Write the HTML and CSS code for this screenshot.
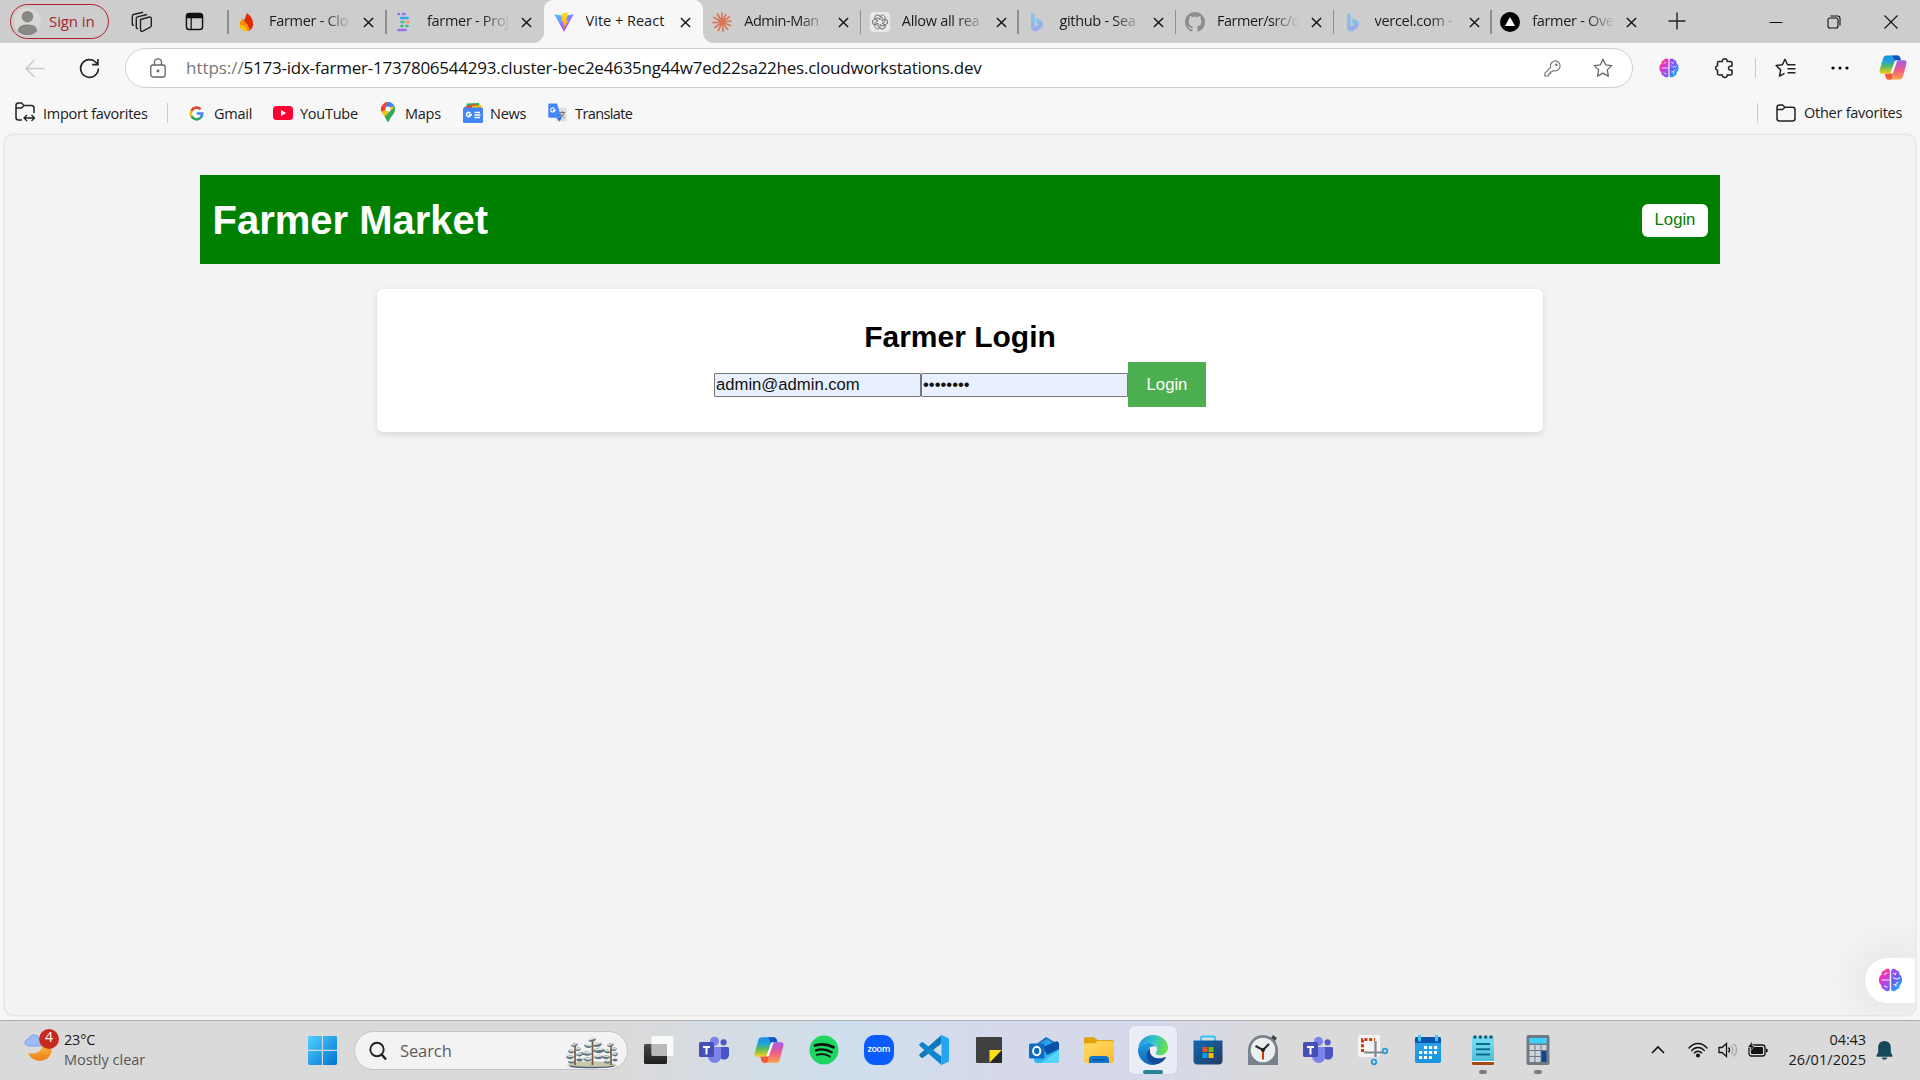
FILE: index.html
```html
<!DOCTYPE html>
<html lang="en">
<head>
<meta charset="utf-8">
<title>Vite + React</title>
<link rel="stylesheet" href="styles.css">
</head>
<body>
<svg class="defs" width="0" height="0">
  <defs>
    <linearGradient id="gBrainL" x1="0" y1="0" x2="0.6" y2="1"><stop offset="0" stop-color="#f59a23"/><stop offset=".4" stop-color="#ee2fc0"/><stop offset="1" stop-color="#7d5cf5"/></linearGradient>
    <linearGradient id="gBrainR" x1="0" y1="0" x2="0.6" y2="1"><stop offset="0" stop-color="#b548e8"/><stop offset=".5" stop-color="#6b5cf3"/><stop offset="1" stop-color="#18b4ff"/></linearGradient>
    <linearGradient id="gCopA" x1="0" y1="0" x2="0" y2="1"><stop offset="0" stop-color="#1a8fe6"/><stop offset=".35" stop-color="#1fa5d8"/><stop offset=".6" stop-color="#5dba5a"/><stop offset="1" stop-color="#f5cf1c"/></linearGradient>
    <linearGradient id="gCopB" x1="0" y1="0" x2="0" y2="1"><stop offset="0" stop-color="#a45ce8"/><stop offset=".5" stop-color="#ee5a8c"/><stop offset="1" stop-color="#fca44c"/></linearGradient>
    <linearGradient id="gVite" x1="0" y1="0" x2=".6" y2="1"><stop offset="0" stop-color="#41d1ff"/><stop offset="1" stop-color="#bd34fe"/></linearGradient>
    <linearGradient id="gBolt" x1="0" y1="0" x2="0" y2="1"><stop offset="0" stop-color="#ffdd35"/><stop offset="1" stop-color="#ffa800"/></linearGradient>
    <linearGradient id="gBing" x1="0" y1="0" x2="0.5" y2="1"><stop offset="0" stop-color="#86cbe6"/><stop offset=".6" stop-color="#8fb9ea"/><stop offset="1" stop-color="#a0a5ea"/></linearGradient>
    <linearGradient id="gWin" x1="0" y1="0" x2="1" y2="1"><stop offset="0" stop-color="#4fd2ff"/><stop offset="1" stop-color="#0072d0"/></linearGradient>
    <linearGradient id="gMoon" x1="0" y1="0" x2="0" y2="1"><stop offset="0" stop-color="#f6bd3c"/><stop offset="1" stop-color="#ef7d1a"/></linearGradient>
    <linearGradient id="gFolder" x1="0" y1="0" x2="1" y2="1"><stop offset="0" stop-color="#ffdc6b"/><stop offset="1" stop-color="#fbbb2d"/></linearGradient>
    <linearGradient id="gEdgeA" x1="0" y1=".3" x2="1" y2=".5"><stop offset="0" stop-color="#1c8fdd"/><stop offset=".45" stop-color="#2fc3cf"/><stop offset="1" stop-color="#6be24a"/></linearGradient>
    <linearGradient id="gEdgeB" x1="0" y1="0" x2="0" y2="1"><stop offset="0" stop-color="#1b9de2"/><stop offset="1" stop-color="#1265b8"/></linearGradient>
    <linearGradient id="gStore" x1="0" y1="0" x2="1" y2="1"><stop offset="0" stop-color="#0d69b5"/><stop offset="1" stop-color="#263a63"/></linearGradient>
    <linearGradient id="gNote" x1="0" y1="0" x2="0" y2="1"><stop offset="0" stop-color="#7ae0f0"/><stop offset="1" stop-color="#4fbcd9"/></linearGradient>
    <linearGradient id="gCal" x1="0" y1="0" x2="0" y2="1"><stop offset="0" stop-color="#2ba6f0"/><stop offset="1" stop-color="#1b93e0"/></linearGradient>
    <linearGradient id="gDark" x1="0" y1="0" x2="0" y2="1"><stop offset="0" stop-color="#4a4a4a"/><stop offset="1" stop-color="#1e1e1e"/></linearGradient>
  </defs>
  <symbol id="brain" viewBox="0 0 20 20">
    <path d="M9.400 1.600C8.400.2 5.800.2 5 2 3.200 2 2 3.800 2.600 5.400 1 6.200 .3 8 .4 10c0 2 .6 3.400 1.900 4.200-.2 2 .9 3.400 2.500 3.700 1 1.800 3.600 1.900 4.600.5z" fill="url(#gBrainL)"/>
    <path d="M10.600 1.600c1-1.400 3.600-1.400 4.400.4 1.800 0 3 1.800 2.400 3.400 1.600.8 2.300 2.600 2.200 4.600 0 2-.6 3.400-1.900 4.200.2 2-.9 3.400-2.500 3.700-1 1.800-3.600 1.900-4.600.5z" fill="url(#gBrainR)"/>
    <path d="M9.400 10H3M5 5.500l2-1.500M5 15l2.200 1M12.500 4.500l1.500 1 .5-1.500M12.500 8c1.500 1.500 3 1.500 5 .2M12.800 14l1.700-.5 1.500-1.500M14.500 13.500v2" stroke="#fff" stroke-width=".9" stroke-opacity=".85" fill="none" stroke-linecap="round"/>
  </symbol>
  <symbol id="copilot" viewBox="0 0 28 26">
    <path d="M7.600 1h10.800c1.600 0 2.400 1 2.900 2.600l.6 2.200h-3.200c-1.500 0-2.200.9-2.700 2.500l-2.800 9c-.5 1.500-1.200 1.900-2.700 1.900H2.600C.7 19.200.1 17.600.7 15.500L4 4C4.600 2 5.700 1 7.600 1z" fill="url(#gCopA)"/>
    <path d="M13.500 1h4.900c1.600 0 2.400 1 2.900 2.600l.6 2.200h-3.200c-1.300 0-2 .6-2.500 1.800z" fill="#1454c0"/>
    <path d="M20.400 25H9.800c-1.700 0-2.500-1-3-2.600L6 19.200h4.500c1.500 0 2.200-.9 2.700-2.500l2.700-8.400c.5-1.600 1.200-2.500 2.700-2.500h6.800c1.900 0 2.500 1.600 1.900 3.700L24 22c-.6 2-1.700 3-3.600 3z" fill="url(#gCopB)"/>
    <path d="M6 19.200h4.500c1.500 0 2.200-.9 2.700-2.500l1.200-3.800-2 12.100H9.800c-1.700 0-2.500-1-3-2.600z" fill="#ef5a35"/>
    <path d="M11.600 18.500l3.900-11.200c.3-.9.900-1.500 1.900-1.500h.9l-4 11.600c-.3 1-.8 1.800-1.800 1.800z" fill="#fff"/>
  </symbol>
  <symbol id="x" viewBox="0 0 12 12"><path d="M1 1l10 10M11 1L1 11" stroke="#161616" stroke-width="1.600" fill="none"/></symbol>
  <symbol id="bing" viewBox="0 0 20 20"><path d="M4 .5l3.800 1.400v12.500l3-1.700 2.500 3.400L7.800 19.300 4 17z" fill="url(#gBing)"/><path d="M8.500 6l5 2.100c1.800.8 2.700 2.500 2.500 4.500-.2 3-3.700 4.800-5.700 6.100-2 1-4.800.6-5.800-1.200 3 .2 7.300-2.700 7.500-4.300l-2.300-1.300z" fill="url(#gBing)"/></symbol>
  <symbol id="star" viewBox="0 0 20 20"><path d="M10 1.200l2.600 5.600 6.200.8-4.500 4.300 1.100 6.200-5.400-3-5.500 3 1.200-6.200L1.200 7.600l6.200-.8z" fill="none" stroke-width="1.300" stroke-linejoin="round"/></symbol>
  <symbol id="teams" viewBox="0 0 30 28">
    <circle cx="24.600" cy="6.300" r="3.100" fill="#5059c9"/><path d="M20 11h8.600c.8 0 1.400.6 1.400 1.400v6c0 3-2 5-5 5s-5-2-5-5z" fill="#4a53c4"/>
    <circle cx="15.500" cy="5.300" r="4.500" fill="#7b83eb"/><path d="M9.500 11h11.300c.8 0 1.400.6 1.400 1.400V20c0 4-2.700 7-6.500 7s-6.700-3-6.700-7z" fill="#7b83eb"/>
    <rect y="6" width="15" height="15" rx="1.500" fill="#464eb8"/><path d="M4 10h7v2H8.500v6.500h-2V12H4z" fill="#fff"/>
  </symbol>
</svg>

<div class="screen">
  <div class="tabstrip">
    <div class="signin">
      <svg class="avatar" viewBox="0 0 28 28"><circle cx="14" cy="14" r="14" fill="#d9d7d4"/><circle cx="14" cy="9" r="6" fill="#8a8886"/><path d="M4 24c0-5 4-7 10-7s10 2 10 7c-3 3-6 4-10 4s-7-1-10-4z" fill="#8a8886"/></svg>
      <span>Sign in</span>
    </div>
    <svg class="ws" viewBox="0 0 22 22" fill="none" stroke="#222" stroke-width="1.400" stroke-linejoin="round"><path d="M9.500 8.500l9-2.500c1-.2 1.800.3 1.800 1.400v7.200c0 .8-.4 1.300-1 1.600l-7.500 3.900c-1.300.6-2.300 0-2.300-1.200z"/><path d="M7 17.300c-1 .4-1.700 0-1.700-1.100V7.400c0-.8.500-1.300 1.200-1.500L16 3.500"/><path d="M3 14.200c-1 .4-1.700 0-1.700-1.100V5c0-.8.500-1.300 1.200-1.500L12 1.200"/></svg>
    <svg class="vt" viewBox="0 0 20 20"><rect x="1.500" y="1.500" width="17" height="17" rx="3" fill="none" stroke="#111" stroke-width="1.500"/><path d="M1 6.500V4.500a3 3 0 0 1 3-3h12a3 3 0 0 1 3 3v2z" fill="#111"/><path d="M6.500 6v12" stroke="#111" stroke-width="1.300"/></svg>
    <div class="tabs">
      <div class="tab sep first"><svg class="fav" viewBox="0 0 20 20"><path d="M9.500 1c4 2 7 7 6.600 11.500C15.800 16.500 13 19 10 19S3 17 3 13c0-3 2-5 3-6l1 1.500C8 6 9.500 4 9.500 1z" fill="#dd2c00"/><path d="M3 12c.2-2.500 1.500-4 3-5.200.3 2.800 5.500 4.500 6.500 11.400C8 20 3 18 3 12z" fill="#ff9100"/><path d="M3 13c3 0 6 2 7 6-4 .4-7-2-7-6z" fill="#ffc400"/></svg><span class="title">Farmer - Clo</span><svg class="close"><use href="#x"/></svg></div>
      <div class="tab sep"><svg class="fav" viewBox="0 0 20 20" stroke-width="2.600" stroke-linecap="round"><path d="M3.500 2H4M8 2h1.500M3.500 18h7" stroke="#9a70f0"/><path d="M6 6h6.500" stroke="#3fa4f4"/><path d="M12 10h1.500" stroke="#f79b4a"/><path d="M6.500 10h2" stroke="#47c0a8"/><path d="M6.500 14h1M11.500 14h1" stroke="#36b98f"/></svg><span class="title">farmer - Proj</span><svg class="close"><use href="#x"/></svg></div>
      <div class="tab active"><svg class="fav" viewBox="0 0 20 20"><path d="M.3 2.200L10 19.700 19.700 2.200 10.500 4z" fill="url(#gVite)"/><path d="M14.500.2L8 1.500l-.7 8.300 2.300-.5-.6 3.300 1.500-.4-1 5 5-9-2.500.5z" fill="url(#gBolt)"/></svg><span class="title full">Vite + React</span><svg class="close"><use href="#x"/></svg></div>
      <div class="tab"><svg class="fav" viewBox="0 0 20 20"><path d="M10 10L10 1M10 10l4-7.600M10 10l7.200-5M10 10l9-1M10 10l8.300 3.500M10 10l5.500 7.200M10 10l1.200 9M10 10l-3.500 8.400M10 10l-7 5.500M10 10l-9 .6M10 10L2 5.500M10 10L5.500 2" stroke="#d97757" stroke-width="1.700" stroke-linecap="round"/></svg><span class="title tight">Admin-Man</span><svg class="close"><use href="#x"/></svg></div>
      <div class="tab sep"><svg class="fav" viewBox="0 0 20 20"><rect width="20" height="20" rx="4" fill="#e9e9e9"/><g fill="none" stroke="#777" stroke-width="1"><path id="petal" d="M10 7.700V5.500C10 3.900 11 3 12.300 3s2.700 1.100 2.700 2.700v3.800l-3 1.700"/><use href="#petal" transform="rotate(60 10 10)"/><use href="#petal" transform="rotate(120 10 10)"/><use href="#petal" transform="rotate(180 10 10)"/><use href="#petal" transform="rotate(240 10 10)"/><use href="#petal" transform="rotate(300 10 10)"/></g></svg><span class="title">Allow all rea</span><svg class="close"><use href="#x"/></svg></div>
      <div class="tab sep"><svg class="fav"><use href="#bing"/></svg><span class="title">github - Sea</span><svg class="close"><use href="#x"/></svg></div>
      <div class="tab sep"><svg class="fav" viewBox="0 0 16 16"><path fill="#8b8e91" d="M8 0C3.580 0 0 3.580 0 8c0 3.540 2.290 6.530 5.470 7.590.4.070.55-.17.55-.38 0-.19-.01-.82-.01-1.490-2.010.37-2.530-.49-2.690-.94-.09-.23-.48-.94-.82-1.130-.28-.15-.68-.52-.01-.53.63-.01 1.080.58 1.230.82.72 1.210 1.870.87 2.330.66.07-.52.28-.87.51-1.070-1.780-.2-3.640-.89-3.640-3.950 0-.87.31-1.590.82-2.150-.08-.2-.36-1.020.08-2.120 0 0 .67-.21 2.200.82.640-.18 1.320-.27 2-.27s1.360.09 2 .27c1.530-1.040 2.200-.82 2.200-.82.44 1.100.16 1.920.08 2.120.51.56.82 1.270.82 2.150 0 3.070-1.870 3.750-3.650 3.950.29.25.54.73.54 1.480 0 1.070-.01 1.930-.01 2.200 0 .21.15.46.55.38A8 8 0 0 0 16 8c0-4.420-3.580-8-8-8z"/></svg><span class="title tight">Farmer/src/c</span><svg class="close"><use href="#x"/></svg></div>
      <div class="tab sep"><svg class="fav"><use href="#bing"/></svg><span class="title">vercel.com -</span><svg class="close"><use href="#x"/></svg></div>
      <div class="tab sep"><svg class="fav" viewBox="0 0 20 20"><circle cx="10" cy="10" r="10"/><path d="M10 5l5 9H5z" fill="#fff"/></svg><span class="title">farmer - Ove</span><svg class="close"><use href="#x"/></svg></div>
    </div>
    <svg class="newtab" viewBox="0 0 18 18"><path d="M9 .5v17M.5 9h17" stroke="#222" stroke-width="1.400"/></svg>
    <div class="wincontrols">
      <svg viewBox="0 0 14 14"><path d="M.5 7.500h13" stroke="#111" stroke-width="1"/></svg>
      <svg viewBox="0 0 14 14" fill="none" stroke="#111" stroke-width="1.100"><rect x="1" y="3" width="10" height="10" rx="2"/><path d="M3.500 1h6.800c1.600 0 2.700 1.100 2.700 2.700v6.800"/></svg>
      <svg viewBox="0 0 14 14"><path d="M.5.500l13 13M13.500.500l-13 13" stroke="#111" stroke-width="1.100"/></svg>
    </div>
  </div>

  <div class="toolbar">
    <svg class="back" viewBox="0 0 20 20"><path d="M19.500 10.500H1M9.500 2L1 10.500 9.500 19" fill="none" stroke="#c9c9c9" stroke-width="1.300"/></svg>
    <svg class="reload" viewBox="0 0 22 22" fill="none" stroke="#222" stroke-width="1.700"><path d="M20.300 11a9.300 9.300 0 1 1-2.700-6.600L19.500 6.500"/><path d="M19.800 1v6h-6"/></svg>
    <div class="omnibox">
      <svg class="lock" viewBox="0 0 16 20" fill="none" stroke="#666" stroke-width="1.300"><rect x=".8" y="7" width="14.400" height="12" rx="2.200"/><path d="M4.500 7V4.300a3.500 3.500 0 0 1 7 0V7"/><circle cx="8" cy="13" r=".8" fill="#666"/></svg>
      <span class="url"><span class="scheme">https://</span>5173-idx-farmer-1737806544293.cluster-bec2e4635ng44w7ed22sa22hes.cloudworkstations.dev</span>
      <svg class="key" viewBox="0 0 18 18" fill="none" stroke="#6f6f6f" stroke-width="1.200" stroke-linejoin="round"><path d="M11.500 1a5.300 5.300 0 1 1-1.700 10.200L8.500 12.500H7v1.700H5.200V16l-1 1H1v-3.200l6-6A5.300 5.300 0 0 1 11.500 1z"/><circle cx="13" cy="5" r=".8"/></svg>
      <svg class="staricon"><use href="#star"/></svg>
    </div>
    <svg class="brainicon"><use href="#brain"/></svg>
    <svg class="puzzle" viewBox="0 0 20 20"><path d="M4 3.500h3.300C7.200 2 8.300.8 9.800.8s2.700 1.200 2.500 2.700h3.200c.8 0 1.500.7 1.500 1.500v3c-2-.3-3.500.6-3.500 2.200S15 12.500 17 12.300v3.200c0 .8-.7 1.500-1.500 1.500h-3.200c.2 1.500-1 2.500-2.500 2.500S7.200 18.500 7.300 17H4c-.8 0-1.500-.7-1.500-1.500v-3.200C1.200 12 .6 11.200.6 10s.6-2 1.900-2.300V5c0-.8.7-1.500 1.500-1.500z" fill="none" stroke="#222" stroke-width="1.500"/></svg>
    <i class="vline"></i>
    <svg class="favs" viewBox="0 0 21 20" fill="none" stroke="#222" stroke-width="1.500" stroke-linejoin="round"><path d="M14 6.800L12.600 6.700 10 1.200 7.400 6.800l-6.200.8 4.500 4.300-1.200 6.200 5-2.800"/><path d="M13 6.800h7.500M12.500 10.800h8M12.500 14.800h8"/></svg>
    <svg class="dots" viewBox="0 0 18 4"><circle cx="2" cy="2" r="1.600"/><circle cx="9" cy="2" r="1.600"/><circle cx="16" cy="2" r="1.600"/></svg>
    <svg class="copiloticon"><use href="#copilot"/></svg>
  </div>

  <div class="bookmarks">
    <svg class="import" viewBox="0 0 20 20" fill="none" stroke="#222" stroke-width="1.500"><path d="M7 18H3.500C2 18 1 17 1 15.500v-12C1 2 2 1 3.500 1h3L9 3.500h7.500C18 3.500 19 4.500 19 6v5M1 6h5.500L9 3.500"/><path d="M9.500 16h9M12 13l-3 3 3 3M16.500 13l3 3-3 3" stroke-width="1.300"/></svg>
    <span class="bm w1">Import favorites</span>
    <i class="vline"></i>
    <svg class="b1" viewBox="0 0 20 20"><circle cx="10" cy="10" r="10" fill="#fff"/><g fill="none" stroke-width="3.200"><path d="M14.800 5A6.800 6.800 0 0 0 4 6.800" stroke="#ea4335"/><path d="M4 6.800a6.800 6.800 0 0 0 0 6.400" stroke="#fbbc05"/><path d="M4 13.200a6.800 6.800 0 0 0 10.500 2" stroke="#34a853"/><path d="M14.500 15.200A6.800 6.800 0 0 0 16.800 10h-6.500" stroke="#4285f4"/></g></svg>
    <span class="bm w2">Gmail</span>
    <svg class="b2" viewBox="0 0 20 14"><rect width="20" height="14" rx="3.500" fill="#f03"/><path d="M8 4l5.200 3L8 10z" fill="#fff"/></svg>
    <span class="bm w3">YouTube</span>
    <svg class="b3" viewBox="0 0 14 20"><path d="M7 0a7 7 0 0 0-5.300 2.400L7 7z" fill="#ea4335"/><path d="M7 0c3 0 6 2 6.800 5L7 7.500 4.500 5z" fill="#4285f4"/><path d="M1.700 2.400A7 7 0 0 0 .6 10L7 7 5 5.200z" fill="#ea4335"/><path d="M.6 10C1.300 11.500 2.500 13 3.500 14.500L13 4.500 9 5z" fill="#fbbc04"/><path d="M3.500 14.500C5 16.500 6 20 7 20c1 0 1.500-3 3.500-5.500S14 10 14 7c0-.9 0-1.700-.4-2.500z" fill="#34a853"/><circle cx="7" cy="7" r="2.500" fill="#fff"/></svg>
    <span class="bm w4">Maps</span>
    <svg class="b4" viewBox="0 0 20 20"><path d="M4 .5L16 0l1 5H3z" fill="#34a853"/><path d="M1 4l11-3 2 5H2z" fill="#ea4335"/><path d="M9 3l9-1 1 4H9z" fill="#fbbc04"/><rect y="4.500" width="20" height="15.500" rx="1.500" fill="#4285f4"/><path d="M9 11.500H6.500v1.200h1A2.200 2.200 0 1 1 7.300 10" fill="none" stroke="#fff" stroke-width="1.500"/><path d="M11.500 9.500h5.500M11.500 12h6M11.500 14.500h5.500" stroke="#fff" stroke-width="1.400"/></svg>
    <span class="bm w5">News</span>
    <svg class="b5" viewBox="0 0 20 20"><rect x="8" y="5" width="11.500" height="14.500" rx="1.200" fill="#dedede"/><path d="M12 10h6M15 8.500V10M17 10c-.5 3-2.500 4.500-4.500 5.500M13 11c.8 2 2.300 3.600 4.300 4.500" stroke="#777" stroke-width="1.100" fill="none"/><path d="M9 15.500h5.500L12 19.500z" fill="#3867d6"/><path d="M1.500.500h8l4.500 15H1.500C.7 15.500.3 15 .3 14.300V1.700C.3 1 .7.500 1.500.500z" fill="#4285f4"/><path d="M8.300 7.500H5.800v1h1A2.200 2.200 0 1 1 6.800 6" stroke="#fff" stroke-width="1.200" fill="none"/></svg>
    <span class="bm w6">Translate</span>
    <i class="vline push"></i>
    <svg class="folder" viewBox="0 0 20 18" fill="none" stroke="#222" stroke-width="1.500"><path d="M3.500 1h3L9 3.300h7.500C18 3.300 19 4.300 19 5.800v8.700c0 1.500-1 2.500-2.500 2.500h-13C2 17 1 16 1 14.500v-11C1 2 2 1 3.500 1zM1 5.500h5.500L9 3.300"/></svg>
    <span class="bm w7">Other favorites</span>
  </div>

  <main class="viewport">
    <header class="site-header">
      <h1>Farmer Market</h1>
      <a class="nav-login">Login</a>
    </header>
    <section class="card">
      <h2>Farmer Login</h2>
      <form class="login-form">
        <input type="text" value="admin@admin.com">
        <input type="password" value="password">
        <button type="button">Login</button>
      </form>
    </section>
    <div class="assistant"><svg><use href="#brain"/></svg></div>
  </main>

  <footer class="taskbar">
    <div class="weather">
      <svg viewBox="0 0 34 36"><path d="M25 16c3 5 2 9-1 13-6 6-17 5-21-4 9 2 15-2 14-9z" fill="url(#gMoon)"/><path d="M4.500 18C1.500 18 0 16.500 0 14.500S1.500 11 4 11c1-3 3-4.500 5.500-4 3 0 4.500 2 5 4.500 1.500 0 3 1 3 3.500s-1 3-3 3z" fill="#9dbcf2" stroke="#6f98e6" stroke-width=".8"/><circle cx="24" cy="11" r="10" fill="#c42b1c"/></svg>
      <b class="count">4</b>
      <div class="wtext"><span class="temp">23°C</span><span class="cond">Mostly clear</span></div>
    </div>
    <svg class="start" viewBox="0 0 30 30" fill="url(#gWin)"><path d="M1.500 0H14.300V14.300H0V1.500A1.500 1.500 0 0 1 1.500 0zM15.500 0h13A1.500 1.500 0 0 1 30 1.500V14.300H15.500zM0 15.500H14.300V30H1.500A1.500 1.500 0 0 1 0 28.500zM15.500 15.500H30v13a1.500 1.500 0 0 1-1.500 1.500h-13z"/></svg>
    <div class="search">
      <svg class="mag" viewBox="0 0 18 18"><circle cx="8" cy="7.500" r="6.700" fill="none" stroke="#222" stroke-width="1.900"/><path d="M12.700 12.500L17 17.500" stroke="#222" stroke-width="2.400"/></svg>
      <span>Search</span>
      <svg class="trees" viewBox="0 0 52 32">
        <path d="M1 30c2-3.500 10-4.500 25-4.500S49 26.500 51 30c-6 2-44 2.500-50 0z" fill="#c9c7ad"/><path d="M4 30.200c10 1.800 38 1.800 44 0" stroke="#4f6478" stroke-width="1.400" fill="none"/>
        <path d="M26.500 3v26M9 8v21M45 8v21" stroke="#79563f" stroke-width="1.700" fill="none"/>
        <g fill="#5f7687"><path d="M22 5c2-3 6-4 8-2 0 2-4 4-8 2zM18 9c3-2 7-1 8 2-3 2-7 1-8-2zM27 10c2-4 6-5 9-2-1 3-6 4-9 2zM15 17c3-3 9-2 11 1-3 3-9 2-11-1zM27 15c2-4 9-4 12-1-2 4-9 4-12 1zM17 23c3-3 7-2 9 1-3 2-7 2-9-1zM28 21c2-3 7-3 9 0-2 3-7 3-9 0z"/><path d="M5 10c1-3 5-4 7-2-1 3-5 4-7 2zM2 15c2-2 5-2 7 1-2 2-6 2-7-1zM9 14c1-3 4-3 6-1-1 2-4 3-6 1zM0 21c2-3 7-2 8 0-2 3-6 3-8 0zM10 19c1-3 6-3 7-1-1 3-5 3-7 1zM2 26c1-2 5-2 7 0-2 2-6 2-7 0zM10 24c2-2 5-2 7 0-2 2-5 2-7 0z"/><path d="M41 10c1-3 5-4 7-2-1 3-5 4-7 2zM38 15c2-2 5-2 7 1-2 2-6 2-7-1zM45 14c1-3 4-3 6-1-1 2-4 3-6 1zM36 21c2-3 7-2 8 0-2 3-6 3-8 0zM46 19c1-3 5-3 6-1-1 3-4 3-6 1zM38 26c1-2 5-2 7 0-2 2-6 2-7 0zM46 24c2-2 4-2 6 0-2 2-4 2-6 0z"/></g>
        <g fill="none" stroke="#dfe2d4" stroke-width="2" stroke-linecap="round"><path d="M23 3.500l5-1.500M20 8.500l4 .7M29 8l5-1.300M17.500 16.300l6 .4M29.500 13.500l7-.7M19.500 22.500l4 .2M30 20l4.500-.2"/><path stroke-width="1.400" d="M6.500 9l4-1.300M3.500 14.500l4 .3M10.500 13l3-.5M2 20l4 .2M11 18l4-.3M4 25h3M42.500 9l4-1.300M39.500 14.500l4 .3M46.500 13l3-.5M38 20l4 .2M47 18l3-.3M40 25h3"/></g>
      </svg>
    </div>
    <div class="apps">
      <div class="app"><svg viewBox="0 0 30 30"><rect y="9" width="23" height="20" rx="1.500" fill="url(#gDark)"/><rect x="7.500" y="1" width="22" height="20" rx="1.500" fill="#fff" opacity=".82"/><path d="M7.500 9H23v12H9a1.500 1.500 0 0 1-1.500-1.500z" fill="#aaa" opacity=".7"/></svg></div>
      <div class="app"><svg><use href="#teams"/></svg></div>
      <div class="app"><svg><use href="#copilot"/></svg></div>
      <div class="app"><svg viewBox="0 0 30 30"><circle cx="15" cy="15" r="14.500" fill="#1ed760"/><g fill="none" stroke="#111" stroke-linecap="round"><path d="M6 10.500c6-1.800 13-1.200 18.500 1.800" stroke-width="2.800"/><path d="M7 15.300c5-1.500 11-.9 15.700 1.900" stroke-width="2.300"/><path d="M7.800 19.800c4.500-1.200 9-.7 13 1.700" stroke-width="1.900"/></g></svg></div>
      <div class="app"><div class="zoom">zoom</div></div>
      <div class="app"><svg viewBox="0 0 30 30"><path d="M0 20.500l2.500 2.300c.5.400 1 .3 1.500 0L22.500 8.500V0L1 18.800c-.6.600-.6 1.200-1 1.700z" fill="#0f79b8"/><path d="M0 9.500l2.500-2.300c.5-.4 1-.3 1.500 0l18.500 14.300V30L1 11.200c-.6-.6-.6-1.200-1-1.700z" fill="#0c86cd"/><path d="M22.500 0L29 3c.6.300 1 .8 1 1.500v21c0 .7-.4 1.200-1 1.500l-6.500 3c-.8.300-1.300.2-1.800-.3.900.7 1.800.2 1.800-1V1.300c0-1.200-.9-1.700-1.800-1 .5-.5 1-.6 1.800-.3z" fill="#24a5f0"/></svg></div>
      <div class="app"><svg viewBox="0 0 30 30"><rect x="2" y="2" width="26" height="26" rx="1" fill="#404040"/><path d="M15.500 15H28L15.500 28z" fill="#fde01c"/><path d="M28 15v12a1 1 0 0 1-1 1H15.500z" fill="#262626"/></svg></div>
      <div class="app"><svg viewBox="0 0 30 30"><path d="M5 11L17 2l12 7-12 9z" fill="#1a6fc4"/><path d="M7 11L18 4l6 4-13 8z" fill="#2fa1e8"/><path d="M5 14h14l11-3v14c0 2-1 3-3 3H8c-2 0-3-1-3-3z" fill="#32b8ee"/><path d="M12 28L30 15v10c0 2-1 3-3 3z" fill="#54d5fa"/><path d="M14 12l14-6 2 2v6L18 20z" fill="#0b4fa8"/><rect y="8.500" width="15.500" height="15" rx="1.500" fill="#0f6cc4"/><ellipse cx="7.700" cy="16" rx="3.600" ry="4.200" fill="none" stroke="#fff" stroke-width="2"/></svg></div>
      <div class="app"><svg viewBox="0 0 30 30"><path d="M0 4c0-1 .6-1.700 1.700-1.700H10L13.500 5H28c1.200 0 2 .7 2 2v5H0z" fill="#e0a30c"/><path d="M0 10c0-1 .7-1.700 1.700-1.700H11L14 6h14c1.300 0 2 .7 2 2v18c0 1.300-.7 2-2 2H2c-1.300 0-2-.7-2-2z" fill="url(#gFolder)"/><path d="M5 28v-3.500C5 22.500 6.300 21 8.500 21h13c2.200 0 3.500 1.500 3.500 3.500V28z" fill="#1377c9"/><path d="M8.500 25h13" stroke="#094f93" stroke-width="1.300"/></svg></div>
      <div class="app current"><svg viewBox="0 0 30 30"><path d="M.2 13.500C1 5.500 7.500 0 15 0c8.500 0 15 5.500 15 12.500 0 4.500-3.500 7.700-8 7.700-3.500 0-4.700-1.300-4.200-2.200.8-1.300 1.300-2.200 1.300-4 0-3.200-3.500-6-8.300-6C5.500 8 1.500 10.500.2 13.500z" fill="url(#gEdgeA)"/><path d="M.1 14.500C1 10.500 5.500 8 10.500 8c4.300 0 6.500 1.800 7.200 3.700-5-1.700-9 2.500-8.500 7 .5 4.800 4 8.600 8.800 10.900-1 .3-2 .4-3 .4C6.500 30 0 23 0 15.500z" fill="url(#gEdgeB)"/><path d="M12 12.900c-3.500 2.300-4.500 7.300-2 11.500 2.500 4 6 5.500 9 4.900 4-1 7-3.500 8.800-6.600.3-.6-.2-1-.8-.7-5 2.500-12.500 1.500-14.500-3.500-.8-2.100-.7-4.100-.5-5.600z" fill="#144a96"/></svg></div>
      <div class="app"><svg viewBox="0 0 30 30"><path d="M8 8V3c0-1 .5-1.500 1.500-1.500h11c1 0 1.500.5 1.500 1.500v5" fill="none" stroke="#31c0f5" stroke-width="1.800"/><path d="M.5 5.500h29v20c0 2.500-1.500 4-4 4h-21c-2.500 0-4-1.500-4-4z" fill="url(#gStore)"/><path d="M9.500 12h5v5h-5z" fill="#f25022"/><path d="M15.500 12h5v5h-5z" fill="#7fba00"/><path d="M9.500 18h5v5h-5z" fill="#00a4ef"/><path d="M15.500 18h5v5h-5z" fill="#ffb900"/></svg></div>
      <div class="app"><svg viewBox="0 0 30 30"><path d="M25 0l4 3-2.500 3.500-4-3z" fill="#444"/><path d="M0 30V15a15 15 0 0 1 30 0v15z" fill="#77828c"/><circle cx="15" cy="15" r="12.300" fill="#eceeef"/><path d="M15 15v9.500" stroke="#d83b01" stroke-width="2"/><path d="M7.500 11L15 15l6-6" fill="none" stroke="#2b2b2b" stroke-width="2.200"/><circle cx="15" cy="15" r="2" fill="#222"/></svg></div>
      <div class="app"><svg><use href="#teams"/></svg></div>
      <div class="app"><svg viewBox="0 0 30 30"><rect width="22" height="22" rx="2" fill="#f4f4f4"/><path d="M4.500 17V4.500H17" fill="none" stroke="#d83b01" stroke-width="3" stroke-dasharray="3 1.800"/><path d="M17.500 6v16M6 17.500h18" stroke="#83898e" stroke-width="2.200"/><circle cx="27" cy="16" r="2.300" fill="none" stroke="#1e9be0" stroke-width="1.700"/><circle cx="16" cy="27" r="2.300" fill="none" stroke="#1e9be0" stroke-width="1.700"/></svg></div>
      <div class="app"><svg viewBox="0 0 30 30"><rect x="2" y="2" width="26" height="26" rx="2" fill="url(#gCal)"/><path d="M2 8V4c0-1.300.7-2 2-2h22c1.300 0 2 .7 2 2v4z" fill="#0a56ad"/><path d="M6.500 1v4M23.500 1v4" stroke="#45c7f5" stroke-width="3" stroke-linecap="round"/><path d="M11 12.500h14M6 17.500h18M6 22.500h13" stroke="#fff" stroke-width="3.200" stroke-dasharray="3.200 1.800"/></svg></div>
      <div class="app running"><svg viewBox="0 0 30 30"><path d="M4 26h22v2.500c0 1-.5 1.500-1.500 1.500h-19C4.500 30 4 29.500 4 28.500z" fill="#a5490c"/><path d="M4 2h22v24.500H4z" fill="url(#gNote)"/><path d="M4 26.500h22" stroke="#fff" stroke-width="1"/><path d="M7 2h.01M12.300 2h.01M17.700 2h.01M23 2h.01" stroke="#0c5e7c" stroke-width="3.600" stroke-linecap="round"/><path d="M8 9h14M8 14.300h14M8 19.500h14" stroke="#0c6c8d" stroke-width="1.900"/></svg></div>
      <div class="app running"><svg viewBox="0 0 30 30"><rect x="3.500" width="23" height="30" rx="2" fill="#6f7a85"/><rect x="6.200" y="3" width="17.500" height="5.500" fill="#3fd0f7"/><path d="M6.500 10h5v5h-5zM12.500 10h5v5h-5zM18.500 10h5v5h-5zM6.500 16h5v5h-5zM12.500 16h5v5h-5zM6.500 22h5v5h-5zM12.500 22h5v5h-5z" fill="#cdd3d9"/><path d="M18.500 16h5v11h-5z" fill="#10488f"/></svg></div>
    </div>
    <div class="tray">
      <svg class="chev" viewBox="0 0 14 8"><path d="M1 7l6-6 6 6" fill="none" stroke="#111" stroke-width="1.600"/></svg>
      <svg class="wifi" viewBox="0 0 20 16" fill="none" stroke="#111" stroke-width="1.400" stroke-linecap="round"><path d="M1 6c5-6 13-6 18 0M3.700 8.600c3.500-4.200 9.100-4.200 12.600 0M6.300 11c2-2.400 5.400-2.400 7.400 0"/><circle cx="10" cy="13.500" r="1.300" fill="#111"/></svg>
      <svg class="vol" viewBox="0 0 20 16" fill="none" stroke="#111" stroke-width="1.300"><path d="M1 5.500h3L8.500 1.500v13L4 10.500H1z"/><path d="M10.500 5.500c1.300 1.500 1.300 3.500 0 5"/><path d="M13 3.500c2.500 2.500 2.500 6.500 0 9M15.500 1.500c4 3.500 4 9.500 0 13" stroke="#aaa"/></svg>
      <svg class="bat" viewBox="0 0 20 16"><rect x="1" y="4" width="16" height="11" rx="2.500" fill="none" stroke="#111" stroke-width="1.300"/><rect x="3" y="6" width="12" height="7" rx="1" fill="#111"/><path d="M18 7.500c1 0 1.800.8 1.800 2s-.8 2-1.800 2z" fill="#111"/><path d="M4 0L0 6.500h3L2 11l4.500-6.300H4z" fill="#111" stroke="#dadada" stroke-width=".6"/></svg>
      <div class="clock"><span class="time">04:43</span><span>26/01/2025</span></div>
      <svg class="bell" viewBox="0 0 18 20"><path d="M9 0C5 0 2.300 3 2.300 6.500v5L.5 15.500c-.2.500 0 1 .7 1h15.600c.7 0 .9-.5.700-1l-1.800-4v-5C15.700 3 13 0 9 0zM6 17.500h6c-.3 1.300-1.400 2.200-3 2.200s-2.700-.9-3-2.200z" fill="#15495a"/></svg>
    </div>
  </footer>
</div>
</body>
</html>
```

FILE: styles.css
```css
* { box-sizing: border-box; }
body { margin: 0; background: #f7f7f7; font-family: "Open Sans", "Noto Sans", sans-serif; color: #1b1b1b; overflow: hidden; }
svg { display: block; flex: none; overflow: visible; }
.defs { position: absolute; }
.screen { width: 1920px; height: 1080px; display: flex; flex-direction: column; overflow: hidden; }

/* tab strip */
.tabstrip { height: 43px; flex: none; background: #cdcdcd; display: flex; align-items: center; }
.signin { margin: 0 0 0 10px; width: 99px; height: 35px; border: 1.500px solid #b3202a; border-radius: 18px; display: flex; align-items: center; padding-left: 3px; color: #a4262c; font-size: 15px; letter-spacing: -.1px; white-space: nowrap; }
.signin span { margin-top: -1px; }
.avatar { width: 27px; height: 27px; margin-right: 8px; }
.ws { width: 22px; height: 22px; margin-left: 22px; }
.vt { width: 19px; height: 19px; margin-left: 32px; }
.tabs { display: flex; margin-left: 24px; height: 43px; }
.tab { width: 157.600px; height: 43px; display: flex; align-items: center; padding-left: 9px; position: relative; }
.tab.first { width: 158px; }
.tab.sep::before { content: ""; position: absolute; left: -1px; top: 10px; width: 1.500px; height: 24px; background: #8e8e8e; }
.tab.active { width: 159.600px; padding-left: 10px; background: #f7f7f7; border-radius: 9px 9px 0 0; }
.tab.active::before, .tab.active::after { content: ""; position: absolute; bottom: 0; width: 10px; height: 10px; }
.tab.active::before { left: -10px; background: radial-gradient(circle at 0 0, transparent 9.500px, #f7f7f7 10px); }
.tab.active::after { right: -10px; background: radial-gradient(circle at 100% 0, transparent 9.500px, #f7f7f7 10px); }
.fav { width: 20px; height: 20px; margin-top: 1px; }
.title { width: 83px; margin: -2px 0 0 12px; font-size: 14.500px; letter-spacing: -.3px; overflow: hidden; white-space: nowrap; -webkit-mask-image: linear-gradient(90deg, #000 66%, transparent 100%); mask-image: linear-gradient(90deg, #000 66%, transparent 100%); }
.title.tight { letter-spacing: -.45px; }
.title.full { -webkit-mask-image: none; mask-image: none; letter-spacing: 0; }
.close { width: 11px; height: 11px; margin: 1px 0 0 11px; }
.newtab { width: 18px; height: 18px; margin: -2px 0 0 19px; }
.wincontrols { display: flex; gap: 43.500px; margin-left: auto; margin-right: 22px; }
.wincontrols svg { width: 14px; height: 14px; }

/* toolbar */
.toolbar { height: 49px; flex: none; display: flex; align-items: center; }
.back { width: 20px; height: 20px; margin-left: 25px; }
.reload { width: 21px; height: 21px; margin: 2px 0 0 34px; }
.omnibox { width: 1508px; height: 40px; margin: 1px 0 0 25px; border: 1px solid #cfcfcf; border-radius: 20px; background: #fff; display: flex; align-items: center; padding-left: 24px; }
.lock { width: 16px; height: 20px; }
.url { margin: -2px 0 0 20px; width: 1359px; white-space: nowrap; color: #111; font-size: 17px; letter-spacing: -.24px; }
.scheme { color: #767676; letter-spacing: -.05px; }
.key { width: 17px; height: 17px; margin-top: 1px; flex: none; margin-left: -1px; }
.staricon { width: 20px; height: 20px; margin-left: 32px; stroke: #666; }
.brainicon { width: 20px; height: 20px; margin-left: 26px; }
.puzzle { width: 20px; height: 20px; margin-left: 36px; }
.vline { width: 1px; height: 20px; background: #cbcbcb; flex: none; }
.toolbar .vline { margin-left: 20px; }
.favs { width: 21px; height: 20px; margin-left: 19px; }
.dots { width: 18px; height: 4px; margin-left: 35px; }
.copiloticon { width: 28px; height: 27px; margin-left: 30px; }

/* favourites bar */
.bookmarks { height: 42px; flex: none; display: flex; align-items: center; padding-left: 15px; font-size: 14.500px; letter-spacing: -.25px; }
.bm { white-space: nowrap; flex: none; }
.import { width: 20px; height: 20px; margin-top: -2px; }
.w1 { width: 124px; margin-left: 8px; }
.b1 { width: 17px; height: 17px; margin-left: 20px; }
.w2 { width: 59px; margin-left: 9px; }
.b2 { width: 20px; height: 14px; margin-top: -1px; }
.w3 { width: 81px; margin-left: 7px; }
.b3 { width: 14px; height: 20px; margin-top: -2px; }
.w4 { width: 58px; margin-left: 10px; }
.b4 { width: 20px; height: 20px; margin-top: -1px; }
.w5 { width: 58px; margin-left: 7px; }
.b5 { width: 19px; height: 19px; margin-top: -1px; }
.w6 { margin-left: 8px; letter-spacing: -.6px; }
.push { margin-left: auto; }
.folder { width: 20px; height: 18px; margin-left: 18px; }
.w7 { width: 116px; margin-left: 8px; margin-top: -2px; }

/* web page */
.viewport { margin: 0 4px; width: 1912px; height: 882px; flex: none; border: 1px solid #e6e6e6; border-radius: 10px; box-shadow: 0 0 2px rgba(0,0,0,.12); background: #f3f3f3; position: relative; padding-top: 40px; font-family: "Liberation Sans", Arial, sans-serif; overflow: hidden; }
.site-header { width: 1520px; height: 89px; margin: 0 auto; padding: 0 12px 0 12.500px; background: #008000; display: flex; justify-content: space-between; align-items: center; }
.site-header h1 { margin: 0; font-size: 40px; line-height: 64px; color: #fff; }
.nav-login { margin-top: 2px; width: 66px; height: 33px; border-radius: 6px; background: #fff; color: #008000; font-size: 16.667px; line-height: 32px; text-align: center; }
.card { width: 1166px; height: 143px; margin: 25px auto 0; padding-top: 24px; background: #fff; border-radius: 6px; box-shadow: 0 2.500px 6px rgba(0,0,0,.1); }
.card h2 { margin: 0 0 1px; font-size: 30px; line-height: 48px; text-align: center; color: #000; }
.login-form { display: flex; justify-content: center; align-items: center; height: 45px; }
.login-form input { width: 207px; height: 24px; padding: 1px; border: 1px solid #767676; border-radius: 1px; background: #e8f0fe; font: 16.667px "Liberation Sans", Arial, sans-serif; color: #111; outline: 0; }
.login-form button { width: 78px; height: 45px; padding: 0; border: 0; background: #4caf50; color: #fff; font: 16.667px "Liberation Sans", Arial, sans-serif; }
.assistant { position: absolute; right: 0; bottom: 12px; width: 50px; height: 45px; border-radius: 23px 0 0 23px; background: #fff; box-shadow: 0 0 50px rgba(0,0,0,.12); padding: 10px 0 0 13px; }
.assistant svg { width: 25px; height: 24px; }

/* taskbar */
.taskbar { height: 60px; margin-top: 4px; flex: none; border-top: 1px solid #adadad; display: flex; align-items: center; background: linear-gradient(90deg, #dadada 0, #dadada 620px, #cfdfee 850px, #d6d9ea 1000px, #d6d9ea 1160px, #dadada 1280px, #dadada 100%); }
.weather { position: relative; width: 283px; height: 59px; margin-left: 25px; display: flex; align-items: center; }
.weather svg { width: 34px; height: 36px; margin-top: -9px; }
.count { position: absolute; left: 19px; top: 6px; width: 10px; font-size: 14px; font-weight: 400; line-height: 20px; text-align: center; color: #fff; }
.wtext { margin: -2px 0 0 5px; display: flex; flex-direction: column; font-size: 14.500px; line-height: 20px; letter-spacing: 0; white-space: nowrap; }
.temp { letter-spacing: -.2px; }
.cond { color: #555; }
.start { width: 29px; height: 29px; }
.search { width: 274px; height: 39px; margin-left: 17px; border: 1px solid #c4c4c4; border-radius: 20px; background: #f3f3f3; display: flex; align-items: center; padding-left: 14px; font-size: 16.500px; color: #5c5c5c; }
.mag { width: 18px; height: 18px; }
.search span { width: 166px; margin: -1px 0 0 13px; letter-spacing: -.1px; }
.trees { width: 52px; height: 32px; margin-top: 2px; }
.apps { display: flex; gap: 6.950px; margin-left: 7px; }
.app { width: 48px; height: 48px; border-radius: 5px; display: flex; align-items: center; justify-content: center; position: relative; margin-top: -1px; }
.app svg { width: 30px; height: 30px; }
.current { background: #ebedf6; box-shadow: 0 0 1px rgba(0,0,0,.2); }
.current::after, .running::after { content: ""; position: absolute; bottom: 0; left: 14px; width: 20px; height: 4px; border-radius: 2px; background: #278395; }
.running::after { left: 20px; width: 8px; background: #7d7d7d; }
.zoom { width: 30px; height: 30px; border-radius: 11px; background: #0b5cff; color: #fff; font-size: 9px; font-weight: 600; line-height: 27px; text-align: center; letter-spacing: -.4px; }
.tray { display: flex; align-items: center; margin-left: auto; margin-right: 27px; }
.chev { width: 14px; height: 8px; margin-right: 23px; margin-top: -2px; }
.wifi { width: 20px; height: 16px; margin-right: 10px; margin-top: -2px; }
.vol { width: 20px; height: 16px; margin-right: 10px; margin-top: -2px; }
.bat { width: 20px; height: 16px; margin-top: -3px; }
.clock { width: 98px; margin-top: -2px; display: flex; flex-direction: column; text-align: right; font-size: 14.500px; line-height: 20px; letter-spacing: .05px; }
.time { letter-spacing: -.1px; }
.bell { width: 17px; height: 19px; margin-left: 10px; margin-top: -1px; }
```
